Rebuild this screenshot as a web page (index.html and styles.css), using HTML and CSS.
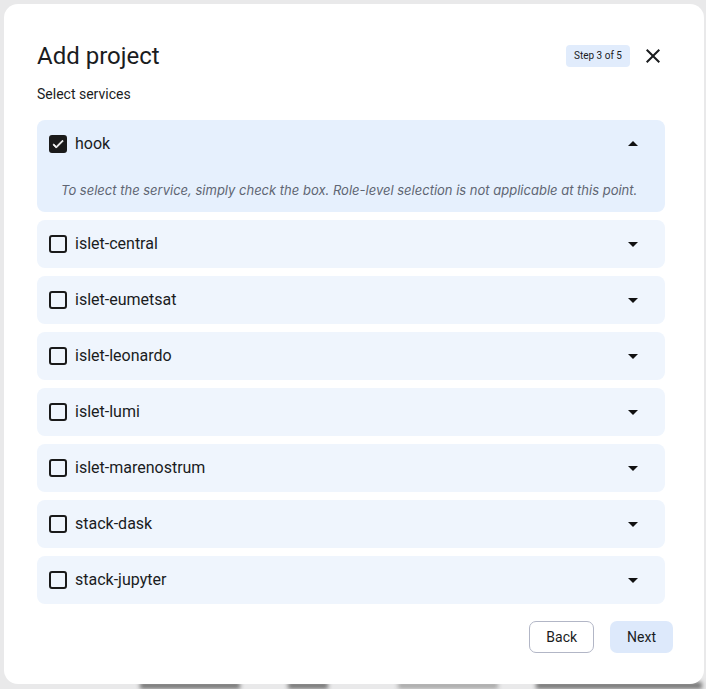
FILE: index.html
```html
<!DOCTYPE html>
<html>
<head>
	<title>Add project</title>
	<link rel="stylesheet" href="styles.css">
</head>
<body>
	<div class="backdrop">
		<div class="backdrop-bar bar-1"></div>
		<div class="backdrop-bar bar-2"></div>
		<div class="backdrop-bar bar-3"></div>
		<div class="backdrop-bar bar-4"></div>
	</div>

	<div class="dialog">
		<div class="dialog-header">
			<h2 class="dialog-title">Add project</h2>
			<span class="step-chip">Step 3 of 5</span>
			<button class="close-button" aria-label="Close">
				<svg width="24" height="24" viewBox="0 0 24 24"><path d="M19 6.41 17.59 5 12 10.59 6.41 5 5 6.41 10.59 12 5 17.59 6.41 19 12 13.41 17.59 19 19 17.59 13.41 12z" fill="#1a1c1e"/></svg>
			</button>
		</div>

		<div class="dialog-subtitle">Select services</div>

		<div class="service-list">
			<div class="service-item open">
				<div class="service-head">
					<span class="checkbox checked">
						<svg width="16" height="16" viewBox="0 0 24 24"><path d="M9 16.17 4.83 12l-1.42 1.41L9 19 21 7l-1.41-1.41z" fill="#fff" stroke="#fff" stroke-width="1.4"/></svg>
					</span>
					<span class="service-name">hook</span>
					<svg class="caret" width="24" height="24" viewBox="0 0 24 24"><path d="m7 14 5-5 5 5z" fill="#111"/></svg>
				</div>
				<div class="service-note">To select the service, simply check the box. Role-level selection is not applicable at this point.</div>
			</div>

			<div class="service-item">
				<div class="service-head">
					<span class="checkbox"></span>
					<span class="service-name">islet-central</span>
					<svg class="caret" width="24" height="24" viewBox="0 0 24 24"><path d="m7 10 5 5 5-5z" fill="#111"/></svg>
				</div>
			</div>

			<div class="service-item">
				<div class="service-head">
					<span class="checkbox"></span>
					<span class="service-name">islet-eumetsat</span>
					<svg class="caret" width="24" height="24" viewBox="0 0 24 24"><path d="m7 10 5 5 5-5z" fill="#111"/></svg>
				</div>
			</div>

			<div class="service-item">
				<div class="service-head">
					<span class="checkbox"></span>
					<span class="service-name">islet-leonardo</span>
					<svg class="caret" width="24" height="24" viewBox="0 0 24 24"><path d="m7 10 5 5 5-5z" fill="#111"/></svg>
				</div>
			</div>

			<div class="service-item">
				<div class="service-head">
					<span class="checkbox"></span>
					<span class="service-name">islet-lumi</span>
					<svg class="caret" width="24" height="24" viewBox="0 0 24 24"><path d="m7 10 5 5 5-5z" fill="#111"/></svg>
				</div>
			</div>

			<div class="service-item">
				<div class="service-head">
					<span class="checkbox"></span>
					<span class="service-name">islet-marenostrum</span>
					<svg class="caret" width="24" height="24" viewBox="0 0 24 24"><path d="m7 10 5 5 5-5z" fill="#111"/></svg>
				</div>
			</div>

			<div class="service-item">
				<div class="service-head">
					<span class="checkbox"></span>
					<span class="service-name">stack-dask</span>
					<svg class="caret" width="24" height="24" viewBox="0 0 24 24"><path d="m7 10 5 5 5-5z" fill="#111"/></svg>
				</div>
			</div>

			<div class="service-item">
				<div class="service-head">
					<span class="checkbox"></span>
					<span class="service-name">stack-jupyter</span>
					<svg class="caret" width="24" height="24" viewBox="0 0 24 24"><path d="m7 10 5 5 5-5z" fill="#111"/></svg>
				</div>
			</div>
		</div>

		<div class="dialog-actions">
			<button class="btn btn-outline">Back</button>
			<button class="btn btn-tonal">Next</button>
		</div>
	</div>
</body>
</html>
```

FILE: styles.css
```css
html, body {
	margin: 0;
	height: 100%;
}

body {
	background-color: #e9e9ea;
	font-family: Roboto, "Noto Sans", Arial, sans-serif;
	color: #1a1c1e;
	overflow: hidden;
	position: relative;
}

/* Blurred page behind the modal */

.backdrop {
	position: absolute;
	left: 0;
	right: 0;
	bottom: 0;
	height: 10px;
	filter: blur(2px);
}

.backdrop-bar {
	position: absolute;
	bottom: 0;
	height: 7px;
	background-color: #777;
}

.bar-1 { left: 140px; width: 100px; }
.bar-2 { left: 288px; width: 40px; }
.bar-3 { left: 398px; width: 100px; background-color: #aaa; }
.bar-4 { left: 536px; width: 166px; }

.dialog {
	position: absolute;
	top: 4px;
	left: 4px;
	width: 700px;
	height: 680px;
	box-sizing: border-box;
	padding: 32px 31px 0 33px;
	background-color: #fff;
	border-radius: 14px;
	display: flex;
	flex-direction: column;
}

.dialog-header {
	display: flex;
	align-items: center;
	height: 40px;
}

.dialog-title {
	flex: 1;
	margin: 0;
	font-size: 24px;
	font-weight: 400;
	line-height: 32px;
	color: #1a1c1e;
}

.step-chip {
	background-color: #e1ecfc;
	border-radius: 4px;
	padding: 0 8px;
	height: 22px;
	line-height: 22px;
	font-size: 10px;
	color: #1a1c1e;
}

.close-button {
	width: 40px;
	height: 40px;
	margin-left: 3px;
	border: none;
	background: none;
	padding: 0;
	display: flex;
	align-items: center;
	justify-content: center;
	cursor: pointer;
}

.dialog-subtitle {
	margin-top: 8px;
	font-size: 14px;
	line-height: 20px;
}

.service-list {
	margin: 16px 8px 0 0;
	display: flex;
	flex-direction: column;
	gap: 8px;
}

.service-item {
	background-color: #eff5fd;
	border-radius: 8px;
}

.service-item.open {
	background-color: #e6f0fd;
}

.service-head {
	height: 48px;
	display: flex;
	align-items: center;
	padding: 0 20px 0 12px;
}

.checkbox {
	width: 18px;
	height: 18px;
	box-sizing: border-box;
	border: 2px solid #1a1a1a;
	border-radius: 3px;
	display: flex;
	align-items: center;
	justify-content: center;
}

.checkbox.checked {
	background-color: #1a1a1a;
}

.service-name {
	flex: 1;
	margin-left: 8px;
	font-size: 16px;
	line-height: 24px;
}

.service-note {
	padding: 12px 24px 12px;
	font-family: Inter, "Noto Sans", Arial, sans-serif;
	font-size: 13px;
	line-height: 20px;
	font-style: italic;
	color: #5f6673;
}

.dialog-actions {
	margin-top: 17px;
	display: flex;
	justify-content: flex-end;
	gap: 16px;
}

.btn {
	height: 32px;
	padding: 0 16px;
	border-radius: 7px;
	font-family: Roboto, "Noto Sans", Arial, sans-serif;
	font-size: 14px;
	font-weight: 400;
	color: #1a1c1e;
	cursor: pointer;
}

.btn-outline {
	background-color: #fff;
	border: 1px solid #b2b6c6;
}

.btn-tonal {
	background-color: #dde9fb;
	border: none;
	padding: 0 17px;
}
```
